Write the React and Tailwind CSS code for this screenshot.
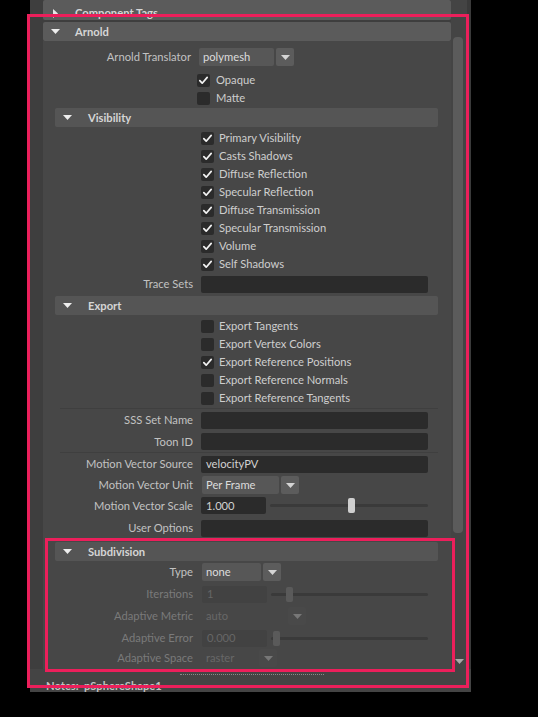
import React from 'react';

const Tri = ({ right }) =>
  right ? (
    <svg width="5" height="9" viewBox="0 0 5 9">
      <path d="M0 0L5 4.5L0 9Z" fill="currentColor" />
    </svg>
  ) : (
    <svg width="9" height="5" viewBox="0 0 9 5">
      <path d="M0 0H9L4.5 5Z" fill="currentColor" />
    </svg>
  );

const Tick = () => (
  <svg width="13" height="13" viewBox="0 0 13 13">
    <path d="M2.8 6.6L5.2 9.2L10.2 3.4" fill="none" stroke="#f2f2f2" strokeWidth="1.7" strokeLinecap="round" strokeLinejoin="round" />
  </svg>
);

function Header({ title, sub, closed, className = 'h-[19px]' }) {
  return (
    <div
      className={`flex items-center rounded-[2px] font-bold text-[#d6d6d6] ${className} ${
        sub ? 'bg-[#555555]' : 'bg-[#5b5b5b]'
      }`}
    >
      {closed ? (
        <span className="ml-[10px] mr-[17px] flex text-[#e6e6e6]">
          <Tri right />
        </span>
      ) : (
        <span className={`ml-[8px] flex text-[#eeeeee] ${sub ? 'mr-[16px]' : 'mr-[15px]'}`}>
          <Tri />
        </span>
      )}
      {title}
    </div>
  );
}

function Box({ on }) {
  return (
    <div className="w-[13px] h-[13px] rounded-[2px] bg-[#2b2b2b] flex items-center justify-center">
      {on && <Tick />}
    </div>
  );
}

function Check({ label, on, top }) {
  return (
    <div className={`flex items-center h-[18px] text-[#cecece] ${top ? 'pl-[154px] gap-[6px]' : 'pl-[146px] gap-[5px]'}`}>
      <Box on={on} />
      <span>{label}</span>
    </div>
  );
}

function Row({ label, dim, className = 'h-[21px]', children }) {
  return (
    <div className={`flex items-center ${className}`}>
      <div className={`w-[138px] text-right whitespace-nowrap ${dim ? 'text-[#7a7a7a]' : 'text-[#c2c2c2]'}`}>{label}</div>
      <div className="ml-[8px] flex items-center flex-1 pr-[10px]">{children}</div>
    </div>
  );
}

function Field({ value, dim, className = 'w-[227px]' }) {
  return (
    <div
      className={`h-[17px] rounded-[2px] flex items-center px-[5px] ${className} ${
        dim ? 'bg-[#424242] text-[#666666]' : 'bg-[#2b2b2b] text-[#d2d2d2]'
      }`}
    >
      {value}
    </div>
  );
}

function Dropdown({ value, dim, className }) {
  return (
    <div className="flex items-center gap-[2px]">
      <div
        className={`h-[18px] rounded-[2px] flex items-center px-[4px] ${className} ${
          dim ? 'bg-[#474747] text-[#686868]' : 'bg-[#575757] text-[#dcdcdc]'
        }`}
      >
        {value}
      </div>
      <div
        className={`w-[18px] h-[18px] rounded-[2px] flex items-center justify-center ${
          dim ? 'bg-[#494949] text-[#777777]' : 'bg-[#5c5c5c] text-[#d4d4d4]'
        }`}
      >
        <Tri />
      </div>
    </div>
  );
}

function Slider({ value, dim, thumb }) {
  return (
    <div className="flex items-center flex-1">
      <Field value={value} dim={dim} className="w-[65px]" />
      <div className="relative ml-[4px] flex-1 h-[3px] rounded-full bg-[#3a3a3a]">
        <div
          className={`absolute top-[-6px] w-[7px] h-[15px] rounded-[2px] ${dim ? 'bg-[#5a5a5a]' : 'bg-[#cfcfcf]'}`}
          style={{ left: thumb }}
        />
      </div>
    </div>
  );
}

export default function App() {
  return (
    <div className="relative min-h-[717px] bg-black font-['Lato',sans-serif] text-[11.2px] leading-none select-none">
      <div className="ml-[30px] w-[441px] h-[692px] bg-[#3e3e3e] flex flex-col">
        <div className="flex h-[669px]">
          <div className="w-[13px]" />
          <div className="w-[408px] overflow-hidden flex flex-col">
            <Header title="Component Tags" closed className="h-[20px] pt-[6px]" />
            <Header title="Arnold" className="h-[19px] mt-[2px]" />
            <div className="flex-1 bg-[#474747] flex flex-col">
              <div className="flex items-center h-[20px] mt-[6px]">
                <div className="w-[148px] text-right text-[#c2c2c2]">Arnold Translator</div>
                <div className="ml-[8px]">
                  <Dropdown value="polymesh" className="w-[75px]" />
                </div>
              </div>
              <div className="mt-[4px]">
                <Check label="Opaque" on top />
                <Check label="Matte" top />
              </div>

              <div className="ml-[12px] w-[383px] flex flex-col">
                <Header title="Visibility" sub className="h-[19px] mt-[1px]" />
                <div className="mt-[2px]">
                  <Check label="Primary Visibility" on />
                  <Check label="Casts Shadows" on />
                  <Check label="Diffuse Reflection" on />
                  <Check label="Specular Reflection" on />
                  <Check label="Diffuse Transmission" on />
                  <Check label="Specular Transmission" on />
                  <Check label="Volume" on />
                  <Check label="Self Shadows" on />
                </div>
                <Row label="Trace Sets" className="h-[22px]">
                  <Field value="" />
                </Row>

                <Header title="Export" sub className="h-[19px] mt-[1px]" />
                <div className="mt-[2px]">
                  <Check label="Export Tangents" />
                  <Check label="Export Vertex Colors" />
                  <Check label="Export Reference Positions" on />
                  <Check label="Export Reference Normals" />
                  <Check label="Export Reference Tangents" />
                </div>
                <div className="mt-[1px] ml-[5px] h-px bg-[#3f3f3f]" />
                <Row label="SSS Set Name" className="h-[22px]">
                  <Field value="" />
                </Row>
                <Row label="Toon ID" className="h-[21px]">
                  <Field value="" />
                </Row>
                <div className="ml-[5px] h-px bg-[#3f3f3f]" />
                <Row label="Motion Vector Source" className="h-[22px]">
                  <Field value="velocityPV" />
                </Row>
                <Row label="Motion Vector Unit" className="h-[20px]">
                  <Dropdown value="Per Frame" className="w-[77px] ml-[1px]" />
                </Row>
                <Row label="Motion Vector Scale" className="h-[21px]">
                  <Slider value="1.000" thumb="78px" />
                </Row>
                <Row label="User Options" className="h-[24px]">
                  <Field value="" />
                </Row>

                <Header title="Subdivision" sub className="h-[19px] mt-[2px]" />
                <Row label="Type" className="h-[22px]">
                  <Dropdown value="none" className="w-[59px] ml-[1px]" />
                </Row>
                <Row label="Iterations" dim className="h-[22px]">
                  <div className="ml-[1px] flex flex-1">
                    <Slider value="1" dim thumb="15px" />
                  </div>
                </Row>
                <Row label="Adaptive Metric" dim className="h-[22px]">
                  <Dropdown value="auto" dim className="w-[84px] ml-[1px]" />
                </Row>
                <Row label="Adaptive Error" dim className="h-[22px]">
                  <div className="ml-[1px] flex flex-1">
                    <Slider value="0.000" dim thumb="2px" />
                  </div>
                </Row>
                <Row label="Adaptive Space" dim className="h-[18px]">
                  <Dropdown value="raster" dim className="w-[55px] ml-[1px]" />
                </Row>
              </div>
            </div>
          </div>
          <div className="w-[16px] bg-[#444444] flex flex-col items-center">
            <div className="mt-[37px] ml-[-3px] w-[10px] h-[496px] rounded-[4px] bg-[#5b5b5b]" />
            <div className="mt-auto mb-[5px] text-[#a8a8a8] flex">
              <Tri />
            </div>
          </div>
          <div className="w-[4px] bg-[#3a3a3a]" />
        </div>
        <div className="flex-1 bg-[#444444] flex flex-col">
          <div className="mt-[5px] ml-[150px] w-[144px] border-t border-dotted border-[#8a8a8a]" />
          <div className="mt-[5px] ml-[16px] font-bold text-[#c4c4c4] whitespace-pre">Notes:  pSphereShape1</div>
        </div>
      </div>

      <div className="absolute left-[27px] top-[14px] w-[442px] h-[674px] border-[3px] border-[#ec1f5b] pointer-events-none" />
      <div className="absolute left-[45px] top-[538px] w-[410px] h-[134px] border-[3px] border-[#ec1f5b] pointer-events-none" />
    </div>
  );
}
